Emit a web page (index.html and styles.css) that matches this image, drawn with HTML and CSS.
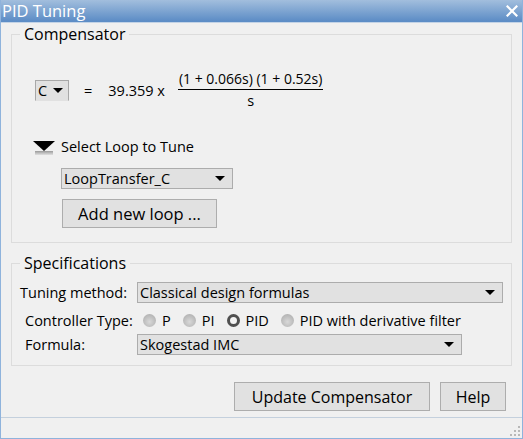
FILE: index.html
```html
<!DOCTYPE html>
<html>
<head>
<meta charset="utf-8">
<link rel="stylesheet" href="styles.css">
</head>
<body>
<div class="window">
  <div class="titlebar">
    <span class="title">PID Tuning</span>
    <svg class="close" width="12" height="12" viewBox="0 0 12 12"><path d="M1.5 1.5 L10.5 10.5 M10.5 1.5 L1.5 10.5" stroke="#fff" stroke-width="2.2" stroke-linecap="square"/></svg>
  </div>
  <div class="main">
    <fieldset class="group comp">
      <legend>Compensator</legend>
      <div class="formula-row">
        <div class="csel"><span>C</span><i class="arrow"></i></div>
        <span class="eq">=</span>
        <span class="gain">39.359 x</span>
        <div class="frac">
          <div class="num">(1 + 0.066s) (1 + 0.52s)</div>
          <div class="den">s</div>
        </div>
      </div>
      <div class="loop-head">
        <svg class="tri" width="22" height="15" viewBox="0 0 22 15">
          <defs><linearGradient id="sh" x1="0" y1="0" x2="0" y2="1"><stop offset="0" stop-color="#9a9a9a"/><stop offset="1" stop-color="#e0e0e0"/></linearGradient></defs>
          <rect x="2" y="10" width="18" height="4" fill="url(#sh)"/>
          <path d="M0 0 H22 L11 10 Z" fill="#000"/>
        </svg>
        <span>Select Loop to Tune</span>
      </div>
      <div class="select loopsel"><span>LoopTransfer_C</span><i class="arrow"></i></div>
      <button class="btn addloop">Add new loop ...</button>
    </fieldset>

    <fieldset class="group spec">
      <legend>Specifications</legend>
      <div class="row tuning">
        <span class="lbl">Tuning method:</span>
        <div class="select wide"><span>Classical design formulas</span><i class="arrow"></i></div>
      </div>
      <div class="row ctype">
        <span class="lbl">Controller Type:</span>
        <div class="radios">
          <span class="radio"><i class="dot"></i>P</span>
          <span class="radio"><i class="dot"></i>PI</span>
          <span class="radio"><i class="dot on"></i>PID</span>
          <span class="radio"><i class="dot"></i>PID with derivative filter</span>
        </div>
      </div>
      <div class="row formula">
        <span class="lbl">Formula:</span>
        <div class="select mid"><span>Skogestad IMC</span><i class="arrow"></i></div>
      </div>
    </fieldset>

    <div class="actions">
      <button class="btn update">Update Compensator</button>
      <button class="btn help">Help</button>
    </div>
  </div>
  <div class="status">
    <svg class="grip" width="10" height="10" viewBox="0 0 10 10" fill="#b8b8b8">
      <rect x="8" y="0" width="2" height="2"/>
      <rect x="4" y="4" width="2" height="2"/><rect x="8" y="4" width="2" height="2"/>
      <rect x="0" y="8" width="2" height="2"/><rect x="4" y="8" width="2" height="2"/><rect x="8" y="8" width="2" height="2"/>
    </svg>
  </div>
</div>
</body>
</html>
```

FILE: styles.css
```css
* { box-sizing: border-box; }
html, body { margin: 0; padding: 0; background: #f0f0f0; }
body {
  font-family: "Open Sans", "Noto Sans", "Liberation Sans", sans-serif;
  font-size: 14.5px;
  color: #000;
}
.window {
  width: 523px;
  height: 439px;
  display: flex;
  flex-direction: column;
  border-left: 1px solid #8fb3dc;
  border-right: 1px solid #8fb3dc;
  border-bottom: 1px solid #8fb3dc;
  background: #f0f0f0;
}
.titlebar {
  height: 23px;
  flex: none;
  display: flex;
  align-items: center;
  justify-content: space-between;
  padding: 0 4px 1px 1px;
  background: linear-gradient(#a2bedd, #5d8dc6 95%);
  border-bottom: 1px solid #c3d3e6;
}
.title {
  color: #fff;
  font-size: 16.5px;
  line-height: 20px;
}
.close { display: block; margin-top: 1px; }

.main {
  flex: 1;
  padding: 1px 10px 0 10px;
  display: flex;
  flex-direction: column;
}
.group {
  margin: 0;
  padding: 0;
  border: 1px solid #dcdcdc;
  min-width: 0;
}
.group legend {
  margin-left: 8px;
  padding: 0 4px;
  font-size: 16px;
  line-height: 20px;
}
.comp { padding-bottom: 14px; }
.spec { margin-top: 10px; padding-bottom: 10px; }

.formula-row {
  margin-top: 26px;
  display: flex;
  align-items: center;
  padding-left: 23px;
}
.csel {
  width: 34px;
  height: 21px;
  background: #e1e1e1;
  border: 1px solid #a8a8a8;
  border-bottom-color: #e1e1e1;
  display: flex;
  align-items: center;
  justify-content: space-between;
  padding: 0 5px 0 2px;
  line-height: 19px;
}
.arrow {
  display: block;
  width: 0;
  height: 0;
  border-left: 5px solid transparent;
  border-right: 5px solid transparent;
  border-top: 5px solid #000;
}
.eq { margin-left: 15px; }
.gain { margin-left: 16px; }
.frac {
  margin-left: 13px;
  display: flex;
  flex-direction: column;
  align-items: stretch;
  text-align: center;
}
.num {
  font-size: 14px;
  line-height: 18px;
  border-bottom: 1px solid #000;
  padding: 0 1px 1px;
}
.den { line-height: 18px; padding-top: 2px; }

.loop-head {
  margin-top: 27px;
  display: flex;
  align-items: center;
  height: 18px;
  padding-left: 21px;
}
.tri { display: block; margin-top: 5px; margin-right: 6px; }

.select {
  height: 21px;
  background: #e1e1e1;
  border: 1px solid #acacac;
  display: flex;
  align-items: center;
  justify-content: space-between;
  padding: 0 7px 0 2px;
  line-height: 19px;
}
.loopsel {
  margin-top: 13px;
  margin-left: 49px;
  width: 172px;
}
.btn {
  font: inherit;
  font-size: 16px;
  background: #e1e1e1;
  border: 1px solid #adadad;
  height: 29px;
  padding: 0;
  color: #000;
}
.addloop {
  display: block;
  margin-top: 10px;
  margin-left: 50px;
  width: 155px;
  font-size: 16.5px;
}

.row { display: flex; align-items: center; }
.lbl { flex: none; width: 125px; }
.tuning { margin-top: 9px; padding-left: 8px; }
.tuning .lbl { width: 117px; }
.wide { width: 366px; }
.ctype { margin-top: 8px; height: 18px; padding-left: 13px; }
.ctype .lbl { width: 118px; }
.formula { margin-top: 5px; padding-left: 13px; }
.formula .lbl { width: 112px; }
.mid { width: 325px; }

.radios { display: flex; align-items: center; }
.radio { display: flex; align-items: center; margin-right: 12px; }
.dot {
  display: block;
  width: 13px;
  height: 13px;
  border-radius: 50%;
  background: radial-gradient(circle at 50% 60%, #d8d8d8, #a8a8a8);
  margin-right: 6px;
}
.dot.on {
  background: #f4f4f4;
  border: 3px solid #505050;
}

.actions {
  margin-top: 16px;
  display: flex;
  justify-content: flex-end;
  gap: 10px;
  padding-right: 6px;
}
.update { width: 196px; }
.help { width: 66px; }

.status {
  height: 21px;
  flex: none;
  border-top: 1px solid #c4d0dd;
  display: flex;
  justify-content: flex-end;
  align-items: flex-end;
  padding: 0 2px 2px 0;
}
.grip { display: block; }
```
